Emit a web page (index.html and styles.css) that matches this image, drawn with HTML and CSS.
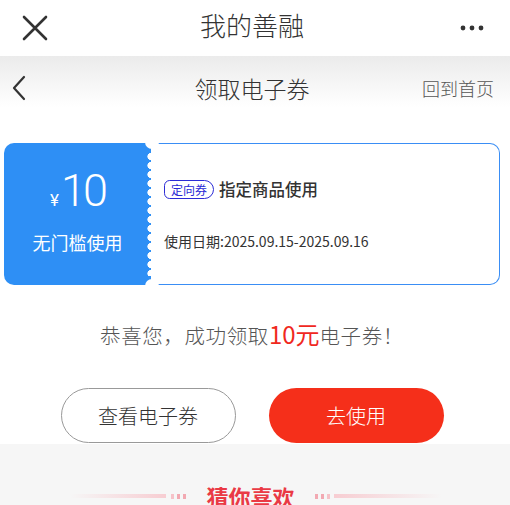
FILE: index.html
```html
<!DOCTYPE html>
<html lang="zh">
<head>
<meta charset="utf-8">
<link rel="stylesheet" href="styles.css">
</head>
<body>
<div class="topbar">
  <svg class="close" width="26" height="26" viewBox="0 0 26 26"><path d="M2 2 L24 24 M24 2 L2 24" stroke="#333" stroke-width="2.6" stroke-linecap="round"/></svg>
  <div class="top-title">我的善融</div>
  <svg class="more" width="24" height="6" viewBox="0 0 24 6"><circle cx="3" cy="3" r="2.4" fill="#333"/><circle cx="12" cy="3" r="2.4" fill="#333"/><circle cx="21" cy="3" r="2.4" fill="#333"/></svg>
</div>
<div class="navbar">
  <svg class="back" width="16" height="26" viewBox="0 0 16 26"><path d="M13 2 L3 13 L13 24" fill="none" stroke="#333" stroke-width="2.2" stroke-linecap="round" stroke-linejoin="round"/></svg>
  <div class="nav-title">领取电子券</div>
  <div class="nav-home">回到首页</div>
</div>
<div class="coupon">
  <div class="coupon-left">
    <div class="amount"><span class="yen">¥</span><span class="num">10</span></div>
    <div class="cond">无门槛使用</div>
    <div class="scallop"></div>
  </div>
  <div class="coupon-right">
    <div class="c-title"><span class="tag">定向券</span><span class="c-name">指定商品使用</span></div>
    <div class="c-date">使用日期:2025.09.15-2025.09.16</div>
  </div>
  <span class="notch notch-top"></span>
  <span class="notch notch-bottom"></span>
</div>
<div class="congrats">恭喜您，成功领取<span class="red">10元</span>电子券！</div>
<div class="actions">
  <div class="btn btn-ghost">查看电子券</div>
  <div class="btn btn-red">去使用</div>
</div>
<div class="guess">
  <div class="guess-head">
    <span class="line line-l"></span>
    <span class="dots"><i></i><i></i><i></i></span>
    <span class="guess-title">猜你喜欢</span>
    <span class="dots dots-r"><i></i><i></i><i></i></span>
    <span class="line line-r"></span>
  </div>
</div>
</body>
</html>
```
FILE: styles.css
```css
html, body { margin: 0; padding: 0; }
body {
  width: 510px;
  height: 505px;
  overflow: hidden;
  background: #fff;
  font-family: "Noto Sans CJK SC", "Noto Sans", sans-serif;
  color: #333;
}
.topbar {
  height: 56px;
  display: flex;
  align-items: center;
  justify-content: space-between;
  padding: 0 26px 0 22px;
  position: relative;
}
.top-title {
  position: absolute;
  left: 0; right: 6px;
  text-align: center;
  font-size: 26px;
  font-weight: 300;
  color: #333;
  line-height: 56px;
  top: -3px;
  pointer-events: none;
}
.navbar {
  height: 64px;
  display: flex;
  align-items: center;
  justify-content: space-between;
  padding: 0 16px 0 11px;
  background: linear-gradient(#ebebeb, #fff 80%);
  position: relative;
}
.nav-title {
  position: absolute;
  left: 0; right: 6px;
  text-align: center;
  font-size: 23px;
  font-weight: 300;
  color: #333;
  line-height: 64px;
}
.nav-home {
  font-size: 18px;
  font-weight: 300;
  color: #555;
  position: relative;
}
.coupon {
  margin: 23px 10px 0 4px;
  height: 142px;
  display: flex;
  position: relative;
}
.coupon-left {
  width: 147px;
  box-sizing: border-box;
  background: #2e8ff5;
  border-radius: 10px 0 0 10px;
  color: #fff;
  display: flex;
  flex-direction: column;
  align-items: center;
  justify-content: center;
  position: relative;
}
.amount { display: flex; align-items: baseline; line-height: 46px; margin-top: -6px; }
.yen { font-size: 17px; margin-right: 2px; font-family: "Roboto", sans-serif; }
.num { font-size: 45px; font-family: "Roboto", sans-serif; font-weight: 300; letter-spacing: -3px; }
.cond { font-size: 18px; margin-top: 6px; }
.scallop {
  position: absolute;
  right: -4px;
  top: 9px;
  bottom: 9px;
  width: 8px;
  background: radial-gradient(circle at 4px 4.5px, #fff 3.3px, transparent 3.9px) 0 0 / 8px 9px repeat-y;
}
.coupon-right {
  flex: 1;
  border: 1.5px solid #3a8ef5;
  border-left: none;
  border-radius: 0 10px 10px 0;
  padding: 33px 0 0 13px;
  background: #fff;
}
.c-title { display: flex; align-items: center; }
.tag {
  font-size: 12px;
  color: #2b2bd6;
  border: 1px solid #2b2bd6;
  border-radius: 6px 10px 10px 6px;
  padding: 0 6px;
  line-height: 17px;
  margin-right: 5px;
}
.c-name { font-size: 16.5px; font-weight: 500; color: #333; }
.c-date { font-size: 14px; color: #333; margin-top: 30px; }
.notch {
  position: absolute;
  left: 141px;
  width: 14px;
  height: 14px;
  border-radius: 50%;
  background: #fff;
}
.notch-top { top: -8px; }
.notch-bottom { bottom: -8px; }
.congrats {
  margin-top: 34px;
  text-align: center;
  font-size: 20.5px;
  line-height: 30px;
  color: #555;
  letter-spacing: 0.6px;
  font-weight: 300;
  padding-right: 6px;
}
.red { color: #f0281e; font-size: 24px; font-weight: 400; letter-spacing: 0; }
.actions {
  margin-top: 38px;
  display: flex;
  justify-content: center;
  gap: 33px;
  padding-right: 6px;
}
.btn {
  width: 175px;
  height: 55px;
  border-radius: 28px;
  display: flex;
  align-items: center;
  justify-content: center;
  font-size: 20px;
  font-weight: 300;
  box-sizing: border-box;
}
.btn-ghost { border: 1.5px solid #999; color: #333; background: #fff; }
.btn-red { background: #f52f1a; color: #fff; width: 175px; }
.guess {
  margin-top: 1px;
  background: #f6f6f6;
  height: 80px;
  padding-top: 38px;
  box-sizing: border-box;
}
.guess-head {
  display: flex;
  align-items: center;
  justify-content: center;
  padding-left: 2px;
}
.line { height: 4px; width: 96px; }
.line-l { background: linear-gradient(90deg, rgba(245,180,190,0), #f7cdd2); margin-right: 5px; }
.line-r { background: linear-gradient(90deg, #f7cdd2, rgba(245,180,190,0)); margin-left: 4px; width: 108px; }
.dots { display: flex; gap: 3px; }
.dots i { display: block; width: 3px; height: 5px; background: #f2a9b2; }
.dots i:first-child { background: #f6c2c8; }
.dots-r i:first-child { background: #f2a9b2; }
.dots-r i:last-child { background: #f6c2c8; }
.guess-title {
  font-size: 22px;
  font-weight: 700;
  color: #ea3a45;
  margin: 0 20px;
  line-height: 28px;
}
```
